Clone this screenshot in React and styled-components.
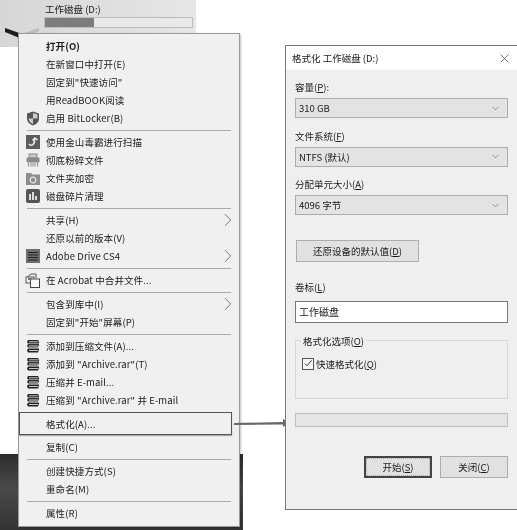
import React from "react";
import styled, { createGlobalStyle } from "styled-components";
import { ChevronDown, ChevronRight, X } from "lucide-react";

const GlobalStyle = createGlobalStyle`
  html, body {
    margin: 0;
    background: #fff;
  }
  * {
    box-sizing: border-box;
  }
`;

//icons for the context menu
const ShieldIcon = () => (
  <svg width="14" height="15" viewBox="0 0 14 15">
    <path d="M7 0.5 L13 2.5 V7.5 C13 11 10 13.5 7 14.5 C4 13.5 1 11 1 7.5 V2.5 Z" fill="#555" />
    <path d="M7 2 V7.5 H11.5 V3.5 Z M7 7.5 V13 C5 12 2.8 10.4 2.5 7.5 Z" fill="#ccc" />
  </svg>
);

const KingsoftIcon = () => (
  <svg width="14" height="14" viewBox="0 0 14 14">
    <rect width="14" height="14" fill="#5c5c5c" />
    <path d="M3 9 C6 12 9 9 8.5 4 M6.5 5.5 L9 3 L11.5 5" fill="none" stroke="#eee" strokeWidth="1.6" />
  </svg>
);

const ShredIcon = () => (
  <svg width="14" height="14" viewBox="0 0 14 14">
    <rect x="3" y="1" width="8" height="4" fill="#c8c8c8" stroke="#888" />
    <rect x="0.5" y="4.5" width="13" height="5" rx="1" fill="#8a8a8a" />
    <path d="M2.5 10 V13.5 M5 10 V13.5 M7 10 V13.5 M9 10 V13.5 M11.5 10 V13.5" stroke="#999" strokeWidth="1.2" />
  </svg>
);

const LockFolderIcon = () => (
  <svg width="14" height="13" viewBox="0 0 14 13">
    <path d="M0 1 H5 L6.5 2.5 H14 V13 H0 Z" fill="#8d8d8d" />
    <circle cx="7" cy="8" r="2.8" fill="none" stroke="#e4e4e4" strokeWidth="1.2" />
  </svg>
);

const DefragIcon = () => (
  <svg width="14" height="14" viewBox="0 0 14 14">
    <rect width="14" height="14" rx="2" fill="#555" />
    <path d="M3 11 V5 H5 V11 Z M6 11 V3 H8 V11 Z M9 11 V7 H11 V11 Z" fill="#ddd" />
  </svg>
);

const AdobeDriveIcon = () => (
  <svg width="14" height="14" viewBox="0 0 14 14">
    <rect width="14" height="14" fill="#6e6e6e" />
    <path d="M2 3.5 H12 M2 6 H12 M2 8.5 H12 M2 11 H12" stroke="#222" strokeWidth="1" />
  </svg>
);

const AcrobatIcon = () => (
  <svg width="16" height="15" viewBox="0 0 16 15">
    <path d="M1 5 L6 1 H11 V5" fill="#eee" stroke="#555" />
    <rect x="1" y="4" width="8" height="6" fill="#f2f2f2" stroke="#555" />
    <rect x="5.5" y="6" width="9" height="8.5" fill="#fafafa" stroke="#444" />
    <rect x="3" y="5" width="4" height="2" fill="#777" />
  </svg>
);

const RarIcon = () => (
  <svg width="14" height="14" viewBox="0 0 14 14">
    <path d="M2 1 H12 L13 3 V4.5 H2 L1 3 Z" fill="#222" />
    <path d="M2 5 H13 V6 L12 8.5 H2 L1 7 Z" fill="#333" />
    <path d="M2 9.5 H13 V10.5 L12 13.5 H2 L1 11.5 Z" fill="#222" />
    <path d="M3 2.8 H12 M3 7 H12 M3 11.5 H12" stroke="#ddd" strokeWidth="0.9" />
  </svg>
);

const menuGroups = [
  [
    { label: "打开(O)", bold: true },
    { label: "在新窗口中打开(E)" },
    { label: "固定到\"快速访问\"" },
    { label: "用ReadBOOK阅读" },
    { label: "启用 BitLocker(B)", icon: <ShieldIcon /> },
  ],
  [
    { label: "使用金山毒霸进行扫描", icon: <KingsoftIcon /> },
    { label: "彻底粉碎文件", icon: <ShredIcon /> },
    { label: "文件夹加密", icon: <LockFolderIcon /> },
    { label: "磁盘碎片清理", icon: <DefragIcon /> },
  ],
  [
    { label: "共享(H)", sub: true },
    { label: "还原以前的版本(V)" },
    { label: "Adobe Drive CS4", icon: <AdobeDriveIcon />, sub: true },
  ],
  [{ label: "在 Acrobat 中合并文件...", icon: <AcrobatIcon /> }],
  [
    { label: "包含到库中(I)", sub: true },
    { label: "固定到\"开始\"屏幕(P)" },
  ],
  [
    { label: "添加到压缩文件(A)...", icon: <RarIcon /> },
    { label: "添加到 \"Archive.rar\"(T)", icon: <RarIcon /> },
    { label: "压缩并 E-mail...", icon: <RarIcon /> },
    { label: "压缩到 \"Archive.rar\" 并 E-mail", icon: <RarIcon /> },
  ],
  [{ label: "格式化(A)...", active: true }],
  [{ label: "复制(C)" }],
  [
    { label: "创建快捷方式(S)" },
    { label: "重命名(M)" },
  ],
  [{ label: "属性(R)" }],
];

const App = () => {
  return (
    <>
      <GlobalStyle />
      <Page>
        <Explorer>
          <DriveIcon width="34" height="12" viewBox="0 0 34 12">
            <path d="M0 0 L17 6 L34 0 V3 L17 11 L0 4 Z" fill="#bbb" />
            <path d="M0 0 L17 6 V11 L0 4 Z" fill="#1c1c1c" />
          </DriveIcon>
          <DriveInfo>
            <DriveName>工作磁盘 (D:)</DriveName>
            <UsageBar>
              <UsageFill style={{ width: `${(50 / 149) * 100}%` }} />
            </UsageBar>
          </DriveInfo>
        </Explorer>
        <DarkBand />

        <Menu>
          {menuGroups.map((group, index) => (
            <div key={group[0].label}>
              {index > 0 && (
                <Separator
                  $hidden={group[0].active}
                  $afterActive={menuGroups[index - 1][0].active}
                />
              )}
              {group.map((item) => (
                <Row key={item.label} $bold={item.bold} $active={item.active}>
                  <IconSlot>{item.icon}</IconSlot>
                  <RowLabel>{item.label}</RowLabel>
                  {item.sub && <SubArrow size={22} strokeWidth={0.8} color="#444" />}
                </Row>
              ))}
            </div>
          ))}
        </Menu>

        <Pointer width="60" height="14" viewBox="0 0 60 14">
          <path d="M0 7 L49 6 V3 L56 7 L49 11 V8.5 L0 9 Z" fill="#666" />
        </Pointer>

        <Dialog>
          <TitleBar>
            <span>格式化 工作磁盘 (D:)</span>
            <X size={15} strokeWidth={1} color="#222" />
          </TitleBar>
          <DialogBody>
            <Field>
              <FieldLabel>容量(<u>P</u>):</FieldLabel>
              <Combo>310 GB<ChevronDown size={11} strokeWidth={1.2} color="#555" /></Combo>
            </Field>
            <Field>
              <FieldLabel>文件系统(<u>F</u>)</FieldLabel>
              <Combo>NTFS (默认)<ChevronDown size={11} strokeWidth={1.2} color="#555" /></Combo>
            </Field>
            <Field>
              <FieldLabel>分配单元大小(<u>A</u>)</FieldLabel>
              <Combo>4096 字节<ChevronDown size={11} strokeWidth={1.2} color="#555" /></Combo>
            </Field>
            <RestoreButton><span>还原设备的默认值(<u>D</u>)</span></RestoreButton>
            <VolumeField>
              <FieldLabel>卷标(<u>L</u>)</FieldLabel>
              <VolumeInput>工作磁盘</VolumeInput>
            </VolumeField>
            <OptionsGroup>
              <GroupTitle>格式化选项(<u>O</u>)</GroupTitle>
              <CheckRow>
                <CheckBox>
                  <svg width="11" height="11" viewBox="0 0 11 11">
                    <path d="M2 5.5 L4.5 8 L9.5 2" fill="none" stroke="#333" strokeWidth="1.1" />
                  </svg>
                </CheckBox>
                <span>快速格式化(<u>Q</u>)</span>
              </CheckRow>
            </OptionsGroup>
            <Progress />
            <ButtonRow>
              <DialogButton $primary><span>开始(<u>S</u>)</span></DialogButton>
              <DialogButton><span>关闭(<u>C</u>)</span></DialogButton>
            </ButtonRow>
          </DialogBody>
        </Dialog>
      </Page>
    </>
  );
};

const Page = styled.div`
  position: relative;
  width: 517px;
  height: 530px;
  overflow: hidden;
  background: #fff;
  color: #1a1a1a;
  font-family: "Noto Sans CJK SC", "Noto Sans", sans-serif;
  font-size: 9.5px;
  filter: blur(0.35px);
`;

const Explorer = styled.div`
  width: 196px;
  height: 47px;
  padding: 2px 3px 0 44px;
  background: linear-gradient(90deg, #d6d6d6, #e6e6e6);
  display: flex;
`;

const DriveIcon = styled.svg`
  position: absolute;
  left: 5px;
  top: 28px;
`;

const DriveInfo = styled.div`
  flex: 1;
`;

const DriveName = styled.div`
  height: 15px;
  line-height: 15px;
  padding-left: 1px;
`;

const UsageBar = styled.div`
  height: 11px;
  background: #e9e9e9;
  border: 1px solid #bbb;
`;

const UsageFill = styled.div`
  height: 100%;
  background: #7d7d7d;
`;

const DarkBand = styled.div`
  position: absolute;
  left: 0;
  top: 454px;
  width: 243px;
  height: 76px;
  background: linear-gradient(180deg, #2c2c2c, #4a4a4a 45%, #333);
`;

const Menu = styled.div`
  position: absolute;
  left: 18px;
  top: 33px;
  width: 222px;
  height: 494px;
  padding: 3px 1px 2px;
  background: #f0f0f0;
  border: 1px solid #999;
  box-shadow: 1px 1px 2px rgba(0, 0, 0, 0.25);
`;

const Separator = styled.div`
  height: ${(props) => (props.$afterActive ? "5px" : "6px")};
  margin: 0 7px 0 7px;
  background: ${(props) =>
    props.$hidden || props.$afterActive
      ? "none"
      : "linear-gradient(#aaa, #aaa) center / 100% 1px no-repeat"};
`;

const Row = styled.div`
  position: relative;
  display: flex;
  align-items: center;
  height: 18px;
  padding-right: 5px;
  font-weight: ${(props) => (props.$bold ? 700 : 400)};
  ${(props) =>
    props.$active &&
    `
    &::before {
      content: "";
      position: absolute;
      left: -1px;
      right: 6px;
      top: -3px;
      bottom: -2px;
      border: 1px solid #555;
      box-shadow: 0 1px 1px rgba(0, 0, 0, 0.3);
    }
  `}
`;

const IconSlot = styled.div`
  width: 26px;
  flex: none;
  display: flex;
  justify-content: center;
  align-items: center;
`;

const RowLabel = styled.span`
  flex: 1;
  white-space: pre;
  letter-spacing: 0.1px;
`;

const SubArrow = styled(ChevronRight)`
  flex: none;
  margin-right: -6px;
`;

const Pointer = styled.svg`
  position: absolute;
  left: 234px;
  top: 416px;
`;

const Dialog = styled.div`
  position: absolute;
  left: 285px;
  top: 45px;
  width: 232px;
  height: 465px;
  background: #efefef;
  border: 1px solid #777;
  border-right-width: 0;
`;

const TitleBar = styled.div`
  height: 24px;
  padding: 0 5px 0 6px;
  background: #fff;
  display: flex;
  align-items: center;
  justify-content: space-between;
`;

const DialogBody = styled.div`
  padding: 10px 9px 0;
  display: flex;
  flex-direction: column;
`;

const Field = styled.div`
  display: flex;
  flex-direction: column;
  gap: 4px;
  margin-bottom: 10.5px;
`;

const FieldLabel = styled.div`
  height: 14px;
  line-height: 14px;
`;

const Combo = styled.div`
  height: 20px;
  padding: 0 6px 0 3px;
  display: flex;
  align-items: center;
  justify-content: space-between;
  background: #e3e3e3;
  border: 1px solid #acacac;
`;

const RestoreButton = styled.div`
  width: 123px;
  height: 22px;
  margin: 14px 0 0 1px;
  display: flex;
  align-items: center;
  justify-content: center;
  background: #e1e1e1;
  border: 1px solid #adadad;
`;

const VolumeField = styled(Field)`
  margin: 18px 0 0;
  gap: 7px;
`;

const VolumeInput = styled.div`
  height: 22px;
  padding: 0 3px;
  display: flex;
  align-items: center;
  background: #fff;
  border: 1px solid #777;
  font-size: 10px;
`;

const OptionsGroup = styled.div`
  position: relative;
  height: 59px;
  margin-top: 17px;
  padding: 16px 6px 0;
  border: 1px solid #d6d6d6;
`;

const GroupTitle = styled.div`
  position: absolute;
  left: 5px;
  top: -7px;
  padding: 0 2px;
  line-height: 14px;
  background: #efefef;
`;

const CheckRow = styled.div`
  display: flex;
  align-items: center;
  gap: 2px;
`;

const CheckBox = styled.div`
  width: 12px;
  height: 12px;
  display: flex;
  align-items: center;
  justify-content: center;
  background: #f6f6f6;
  border: 1px solid #555;
`;

const Progress = styled.div`
  height: 14px;
  margin-top: 14px;
  background: #e5e5e5;
  border: 1px solid #bcbcbc;
`;

const ButtonRow = styled.div`
  margin-top: 29px;
  display: flex;
  justify-content: flex-end;
  gap: 8px;
`;

const DialogButton = styled.div`
  width: 68px;
  height: 22px;
  display: flex;
  align-items: center;
  justify-content: center;
  background: #e1e1e1;
  border: ${(props) => (props.$primary ? "2px solid #444" : "1px solid #adadad")};
  ${(props) => props.$primary && "outline: 1px dotted #aaa; outline-offset: -3px;"}
`;

export default App;
